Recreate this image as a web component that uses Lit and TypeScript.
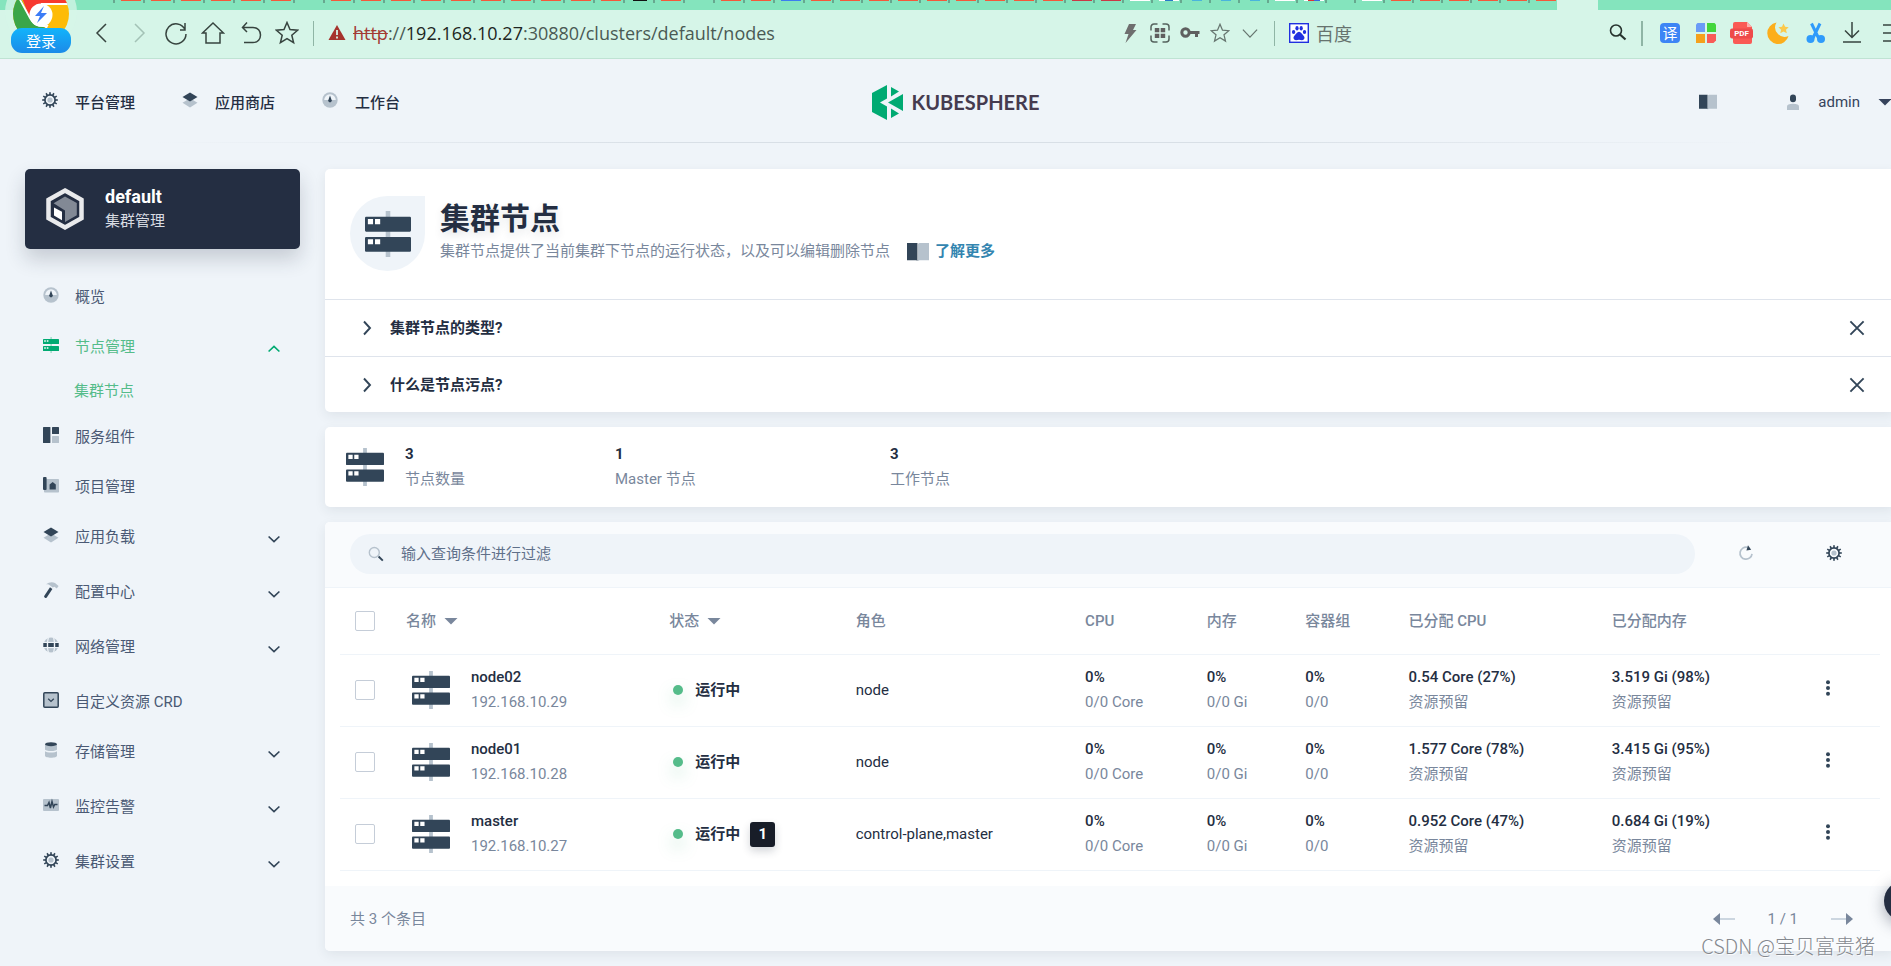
import { LitElement, html, svg, css } from "lit";
import { customElement, property } from "lit/decorators.js";
import { classMap } from "lit/directives/class-map.js";

const DARK = "#324558";
const LIGHT = "#b6c2cd";

/* ---------- icons ---------- */

const gearTeeth = Array.from({ length: 12 }, (_, i) => i * 30);

const glyphs: Record<string, unknown> = {
  gear: svg`
    ${gearTeeth.map((a) => svg`<rect x="7.2" y="0.2" width="1.6" height="3" fill=${DARK} transform="rotate(${a} 8 8)"/>`)}
    <circle cx="8" cy="8" r="5.1" fill="none" stroke=${DARK} stroke-width="1.7"/>
    <circle cx="8" cy="8" r="2.6" fill=${LIGHT}/>`,
  layers: svg`
    <path d="M8 6.2 15.5 10.8 8 15.6.5 10.8Z" fill=${LIGHT}/>
    <path d="M8 .4 15.5 5 8 9.6.5 5Z" fill=${DARK}/>`,
  gauge: svg`
    <circle cx="8" cy="8" r="7.7" fill=${LIGHT}/>
    <path d="M2.2 8a5.8 5.8 0 0 1 11.6 0Z" fill="#eff4f9"/>
    <path d="M8 3.4 9.8 8.6a1.8 1.8 0 1 1-3.6 0Z" fill=${DARK}/>`,
  nodes: svg`
    <path d="M7.4 0h1.4v16H7.4Z" fill="#99dcc5"/>
    <rect x="0" y="2" width="16" height="5" rx=".6" fill="#00aa72"/>
    <rect x="0" y="9" width="16" height="5" rx=".6" fill="#00aa72"/>
    <path d="M1.2 3.2h1.6v1.6H1.2ZM3.8 3.2h1.6v1.6H3.8ZM1.2 10.2h1.6v1.6H1.2ZM3.8 10.2h1.6v1.6H3.8Z" fill="#fff"/>`,
  components: svg`
    <rect x="0" y="0" width="7.4" height="16" rx=".6" fill=${DARK}/>
    <rect x="9" y="0" width="7" height="7" rx=".6" fill=${DARK}/>
    <rect x="9" y="9" width="7" height="7" rx=".6" fill=${LIGHT}/>`,
  project: svg`
    <rect x="1" y="2" width="15" height="13.6" rx=".8" fill=${LIGHT}/>
    <rect x="0" y="0" width="3.6" height="13" rx="1" fill=${DARK}/>
    <path d="M6.6 12.6V7.6L9.7 5l3.1 2.6v5Z" fill=${DARK}/>`,
  hammer: svg`
    <path d="M3 2.200C6 0 9.500-.4 12 1l3.600 3-1.800 2.600-2.400-1.800-1.600.8-2-1.600C6.400 2.600 4.800 2.200 3 2.200Z" fill=${LIGHT}/>
    <path d="M7 5.200 9.400 7 3.800 15.600c-.8 1-3.200-.2-2.600-1.600Z" fill=${DARK}/>`,
  globe: svg`
    <circle cx="8" cy="8" r="7.500" fill=${LIGHT}/>
    <path d="M5.400.5C4.200 5 4.200 11 5.400 15.500M10.600.5c1.200 4.500 1.200 10.500 0 15" stroke="#eff4f9" stroke-width="1.200" fill="none"/>
    <path d="M0 4.900h16v6.200H0Z" fill="#eff4f9"/>
    <path d="M.3 5.900h3.500v4.200H.3ZM5.200 5.900h5.600v4.200H5.200ZM12.200 5.900h3.500v4.200h-3.500Z" fill=${DARK}/>`,
  crd: svg`
    <rect x=".8" y=".8" width="14.400" height="14.400" rx="1" fill=${LIGHT} stroke=${DARK} stroke-width="1.500"/>
    <path d="M5.200 6.700 8 9.400l2.800-2.700" stroke=${DARK} stroke-width="1.300" fill="none"/>`,
  storage: svg`
    <path d="M2 2.500v4.800c0 2.400 12 2.400 12 0V2.500Z" fill=${LIGHT}/>
    <path d="M2 9.300v4.500c0 2.600 12 2.600 12 0V9.300c-1.500 1.700-10.500 1.700-12 0Z" fill=${LIGHT}/>
    <ellipse cx="8" cy="2.200" rx="6" ry="2" fill=${DARK}/>`,
  monitor: svg`
    <rect x="0" y="2" width="16" height="12" rx="1" fill=${LIGHT}/>
    <path d="M1.500 8.500h3L6 5.500 7.400 11 9 4.500l1.500 5.500 1.300-2.500h2.700" stroke=${DARK} stroke-width="1.500" fill="none"/>`,
  book: svg`
    <path d="M0 1.500h7.600v13L6.800 14H0Z" fill=${DARK}/>
    <path d="M16 1.500H9L8 2v12.500l1-.5h7Z" fill=${LIGHT}/>`,
  user: svg`
    <path d="M2 16v-3.500C2 10.500 4 9.700 8 9.700s6 .8 6 2.800V16Z" fill=${LIGHT}/>
    <path d="M5 3.500a3 3 0 0 1 6 0v1.800a3 3 0 0 1-6 0Z" fill=${DARK}/>`,
  magnifier: svg`
    <circle cx="6.300" cy="6.500" r="5" fill="none" stroke=${LIGHT} stroke-width="1.400"/>
    <path d="m10.600 10.500 4.200 4.200" stroke=${DARK} stroke-width="1.900"/>`,
  refresh: svg`
    <path d="M9.500 2.400A6 6 0 1 0 14 8.800" fill="none" stroke=${LIGHT} stroke-width="1.700"/>
    <path d="m10 .2 3.200 4.600-4.800.8Z" fill=${DARK}/>`,
  close: svg`<path d="m1.400 1.400 13.200 13.200M14.600 1.400 1.400 14.600" stroke=${DARK} stroke-width="1.900"/>`,
  right: svg`<path d="m5 1.500 6 6.500-6 6.500" stroke=${DARK} stroke-width="1.900" fill="none"/>`,
  down: svg`<path d="m2.600 5.500 5.400 5 5.400-5" stroke=${DARK} stroke-width="1.700" fill="none"/>`,
  up: svg`<path d="m2.600 10.500 5.400-5 5.400 5" stroke="#00aa72" stroke-width="1.700" fill="none"/>`,
  caret: svg`<path d="M1.500 5h13L8 11.500Z" fill="currentColor"/>`,
  dots: svg`<circle cx="8" cy="2.200" r="2" fill=${DARK}/><circle cx="8" cy="8" r="2" fill=${DARK}/><circle cx="8" cy="13.800" r="2" fill=${DARK}/>`,
};

const icon = (name: string, size = 16) =>
  html`<svg width=${size} height=${size} viewBox="0 0 16 16" aria-hidden="true">${glyphs[name]}</svg>`;

const serverIcon = (size: number) => html`
  <svg width=${size} height=${size} viewBox="0 0 40 40" aria-hidden="true">
    <path d="M18 0h4v40h-4Z" fill=${LIGHT}/>
    <rect x="0" y="5" width="40" height="13" rx="1" fill=${DARK}/>
    <rect x="0" y="22.500" width="40" height="13" rx="1" fill=${DARK}/>
    <path d="M2.500 7h4.500v4.500H2.500ZM8.700 7h4.500v4.500H8.700ZM2.500 24.500h4.500V29H2.500ZM8.700 24.500h4.500V29H8.700Z" fill="#fff"/>
  </svg>`;

/* ---------- browser bar ---------- */

const tabKinds =
  "rrrrrr-rrrrrrrrrrkr-rrb" + "rrrrrrrrrddwmcccwx-wrrrrrr";

const tabClass: Record<string, string> = {
  r: "red", d: "crimson", w: "white", m: "mixed", c: "sky", k: "black", b: "blue", x: "multi", "-": "none",
};

@customElement("browser-bar")
export class BrowserBar extends LitElement {
  static styles = css`
    :host { display: block; position: relative; }
    * { box-sizing: border-box; }
    svg { display: block; flex: none; }
    button { border: 0; padding: 0; background: none; font: inherit; color: inherit; }
    .tabs { display: flex; height: 10px; background: #84e4bd; padding-left: 113px; }
    .tab { flex: 0 1 30px; height: 3px; padding-left: 6px; border-left: 2px solid #67a88f; }
    .tab.late { flex-basis: 29px; }
    .fav { display: block; width: 20px; height: 1px; }
    .red { background: #f4593a; }
    .crimson { background: #c93a45; }
    .white { background: #fff; }
    .mixed { background: linear-gradient(90deg, #fff 30%, #2878c8 30% 70%, #fff 70%); }
    .sky { background: #4ab4dc; width: 10px; margin-left: 4px; }
    .black { background: #111; width: 14px; margin-left: 2px; }
    .blue { background: #3c7df0; }
    .multi { background: linear-gradient(90deg, #fff 20%, #d33 20% 50%, #3a6ae0 50% 80%, #fff 80%); }
    .active { width: 41px; height: 10px; background: #d6f5e8; flex: none; }
    .bar {
      display: flex; align-items: center; height: 49px; padding: 0 0 2px 90px;
      background: #d6f5e8; border-bottom: 1px solid #bfe3d3; color: #4a5a54;
      font: 18px "Noto Sans", "Noto Sans CJK SC", sans-serif;
    }
    .group { display: flex; align-items: center; flex: none; }
    .nav { gap: 13px; }
    .mid { gap: 10px; }
    .tools { gap: 12px; margin-right: -7px; }
    .sep { width: 1px; height: 25px; background: #8fb5a5; margin: 0 14px; flex: none; }
    .sep.thick { width: 2px; margin: 0 15px 0 13px; }
    .address { display: flex; align-items: center; flex: 1; gap: 7px; min-width: 0; font: 18px "Open Sans", "Noto Sans", sans-serif; white-space: nowrap; }
    .scheme { color: #a33a33; text-decoration: line-through; }
    .host { color: #1d2622; }
    .bookmark { display: flex; align-items: center; gap: 7px; color: #66736e; text-decoration: none; }
    .free { flex: 0 1 256px; }
    .brand { position: absolute; left: 5px; top: 0; width: 72px; height: 58px; display: flex; justify-content: center; align-items: flex-start; }
    .brand svg { position: absolute; left: 0; top: 0; }
    .login {
      position: relative; margin-top: 28px; width: 60px; height: 25px; border-radius: 11px;
      background: linear-gradient(#12b4fb, #1c8ae8); color: #fff; font: 15px/24px "Noto Sans CJK SC", sans-serif;
    }
    .lang { font: 15px "Noto Sans CJK SC", sans-serif; }
    .pdf { font: bold 8px Roboto, sans-serif; }
  `;

  private stroke(d: string, color = "#37443f", size = 24) {
    return html`<svg width=${size} height=${size} viewBox="0 0 24 24" fill="none" stroke=${color} stroke-width="1.500" aria-hidden="true"><path d=${d}/></svg>`;
  }

  render() {
    const star = "m12 1.500 3 7.100 7.600.6-5.800 5 1.800 7.500-6.600-4-6.600 4 1.800-7.500-5.800-5 7.600-.6Z";
    return html`
      <div class="tabs">
        ${[...tabKinds].map((k, i) => html`<span class=${classMap({ tab: true, late: i > 22 })}><i class="fav ${tabClass[k]}"></i></span>`)}
        <span class="active"></span>
      </div>
      <div class="bar">
        <div class="group nav">
          <button aria-label="后退">${this.stroke("m16 3-9 9 9 9")}</button>
          <button aria-label="前进">${this.stroke("m8 3 9 9-9 9", "#a3c2b6")}</button>
          <button aria-label="刷新">${this.stroke("M21 5v4h-5M21 8.500A10 10 0 1 0 22 13M16 9h5V2")}</button>
          <button aria-label="主页">${this.stroke("m1.500 12 10.500-10 10.500 10H19v10H5V12Z")}</button>
          <button aria-label="恢复">${this.stroke("M9 1.500 4.500 6.500 9 11M4.500 6.500H15c10 0 10 15 0 15H6")}</button>
          <button aria-label="收藏">${this.stroke(star)}</button>
        </div>
        <span class="sep"></span>
        <div class="address">
          <svg width="18" height="16" viewBox="0 0 18 16" aria-hidden="true"><path d="M9 0 17.500 15H.5Z" fill="#a5332c"/><path d="M9 5v5M9 11.500v2" stroke="#d6f5e8" stroke-width="1.800"/></svg>
          <span><span class="scheme">http</span>://<span class="host">192.168.10.27</span>:30880/clusters/default/nodes</span>
        </div>
        <div class="group mid">
          <svg width="20" height="20" viewBox="0 0 20 20" aria-hidden="true"><path d="M9 1h7l-3 6h3.500L5.500 20 8.500 11H4.500Z" fill="#6e6e6e"/></svg>
          <svg width="20" height="20" viewBox="0 0 20 20" aria-hidden="true"><path d="M7.500 1H4a3 3 0 0 0-3 3v3.500M12.500 1H16a3 3 0 0 1 3 3v3.500M7.500 19H4a3 3 0 0 1-3-3v-3.500M12.500 19H16a3 3 0 0 0 3-3v-3.500" fill="none" stroke="#56635e" stroke-width="1.500"/><path d="M4.800 5h4.500v4.300H4.800ZM10.700 5h4.500v4.300h-4.500ZM4.800 10.700h4.500V15H4.800ZM10.700 10.700h4.500V15h-4.500Z" fill="#5f5f5f"/></svg>
          <svg width="20" height="20" viewBox="0 0 20 20" aria-hidden="true"><circle cx="5.500" cy="9.500" r="3.700" fill="none" stroke="#5f5f5f" stroke-width="3"/><path d="M8.500 8h11v3H18v3h-3v-3H8.500Z" fill="#5f5f5f"/></svg>
          ${this.stroke(star, "#66756f", 20)}
          ${this.stroke("m3.500 8 8.500 9 8.500-9", "#66756f", 20)}
        </div>
        <span class="sep"></span>
        <a class="bookmark" href="#baidu">
          <svg width="20" height="20" viewBox="0 0 20 20" aria-hidden="true"><rect x=".7" y=".7" width="18.600" height="18.600" fill="#fff" stroke="#2130e0" stroke-width="1.400"/><g fill="#2130e0"><ellipse cx="4.600" cy="9" rx="1.700" ry="2.100"/><ellipse cx="8" cy="5.200" rx="1.600" ry="2.200"/><ellipse cx="12.200" cy="5.200" rx="1.600" ry="2.200"/><ellipse cx="15.500" cy="9" rx="1.700" ry="2.100"/><path d="M10 8.800c2 0 3 2.500 4.800 4.200 1.500 1.700.4 4.200-1.800 4.200-1.200 0-2-.4-3-.4s-1.800.4-3 .4c-2.200 0-3.300-2.500-1.800-4.200C7 11.300 8 8.800 10 8.800Z"/></g></svg>
          百度
        </a>
        <span class="free"></span>
        <button aria-label="搜索"><svg width="20" height="20" viewBox="0 0 20 20" fill="none" stroke="#26322d" aria-hidden="true"><circle cx="8" cy="7.500" r="5.500" stroke-width="1.600"/><path d="m12 11.500 5.500 5" stroke-width="2.200"/></svg></button>
        <span class="sep thick"></span>
        <div class="group tools">
          <svg width="24" height="24" viewBox="0 0 24 24" aria-hidden="true"><rect x="2" y="2" width="20" height="20" rx="4" fill="#3d85f5"/><text class="lang" x="12" y="17.500" text-anchor="middle" fill="#fff">译</text></svg>
          <svg width="24" height="24" viewBox="0 0 24 24" aria-hidden="true"><path d="M3.500 2H11v9H2V3.500Z" fill="#6a9bf7"/><path d="M13 2h7.500L22 3.500V11h-9Z" fill="#42d63c"/><path d="M2 13h9v9H2Z" fill="#f5a11c"/><path d="M13 13h9v6.500L19.500 22H13Z" fill="#f95b57"/></svg>
          <svg width="24" height="24" viewBox="0 0 24 24" aria-hidden="true"><path d="M5 1h12l5 5v15a2 2 0 0 1-2 2H5a2 2 0 0 1-2-2V3a2 2 0 0 1 2-2Z" fill="#fa5a55"/><path d="m17 1 5 5h-5Z" fill="#fdb0ad"/><rect x="0" y="7.500" width="23" height="10" rx="2" fill="#ee4b4b"/><text class="pdf" x="11.500" y="15.400" text-anchor="middle" fill="#fff">PDF</text></svg>
          <svg width="24" height="24" viewBox="0 0 24 24" aria-hidden="true"><path d="M10.500 1.500A10.800 10.800 0 1 0 22.500 15 9.500 9.500 0 0 1 10.500 1.500Z" fill="#fcae1c"/><path d="m17.500 2.500 1.600 3.300 3.600.4-2.700 2.500.8 3.600-3.300-1.900-3.200 1.900.8-3.600-2.700-2.500 3.600-.4Z" fill="#fbc94b"/></svg>
          <svg width="24" height="24" viewBox="0 0 24 24" aria-hidden="true"><path d="m9.500 2.500 7 14.500M18 2.500 11 17" stroke="#2f9bfb" stroke-width="3"/><circle cx="8.500" cy="18" r="4" fill="#2f9bfb"/><circle cx="19" cy="18" r="4" fill="#2f9bfb"/></svg>
          ${this.stroke("M14 1v15M7 9.500l7 7 7-7M5 21h18")}
          ${this.stroke("M9 4h15M9 12h15M9 20h15")}
        </div>
      </div>
      <div class="brand">
        <svg width="72" height="58" viewBox="0 0 72 58" aria-hidden="true">
          <defs><clipPath id="disc"><circle cx="36" cy="14" r="28"/></clipPath></defs>
          <circle cx="36" cy="12" r="36" fill="#d6f5e8" opacity=".75"/>
          <g clip-path="url(#disc)">
            <path d="M0-20h72v70H0Z" fill="#fdbb08"/>
            <path d="M0-10h12L26 20l14 8-4 20H0Z" fill="#3aa648"/>
            <path d="M14-10h58V4H40L24 16Z" fill="#f7392f"/>
            <path d="M13-4 25 18c4 7 8 9 17 8l-4 8M36 4h36" stroke="#fff" stroke-width="1.800" fill="none"/>
          </g>
          <circle cx="36" cy="15" r="11.500" fill="#fff"/>
          <path d="m39 6-9 10h5l-3 7 10-10h-6Z" fill="#3c7cf6"/>
        </svg>
        <button class="login">登录</button>
      </div>
    `;
  }
}

/* ---------- sidebar ---------- */

interface NavItem { icon: string; label: string; group?: boolean; open?: boolean; children?: string[]; }

const navItems: NavItem[] = [
  { icon: "gauge", label: "概览" },
  { icon: "nodes", label: "节点管理", group: true, open: true, children: ["集群节点"] },
  { icon: "components", label: "服务组件" },
  { icon: "project", label: "项目管理" },
  { icon: "layers", label: "应用负载", group: true },
  { icon: "hammer", label: "配置中心", group: true },
  { icon: "globe", label: "网络管理", group: true },
  { icon: "crd", label: "自定义资源 CRD" },
  { icon: "storage", label: "存储管理", group: true },
  { icon: "monitor", label: "监控告警", group: true },
  { icon: "gear", label: "集群设置", group: true },
];

@customElement("side-nav")
export class SideNav extends LitElement {
  static styles = css`
    :host { display: block; }
    * { box-sizing: border-box; }
    svg { display: block; flex: none; }
    .cluster {
      display: flex; align-items: center; gap: 20px; width: 100%; height: 80px; padding: 0 20px;
      border: 0; border-radius: 5px; background: #242e42; color: #fff; text-align: left;
      font: inherit; box-shadow: 0 10px 20px rgba(36, 46, 66, 0.2);
    }
    .name { display: block; font-size: 18px; line-height: 25px; font-weight: 700; }
    .kind { display: block; line-height: 25px; color: #d8dce3; }
    ul { list-style: none; margin: 0; padding: 0; }
    .menu { padding-top: 23px; }
    .link { display: flex; align-items: center; gap: 16px; height: 50px; padding: 0 18px; color: #4a5974; text-decoration: none; }
    .group .link { margin-bottom: 5px; }
    .glyph { padding-bottom: 4px; }
    .chevron { padding-top: 4px; }
    .label { flex: 1; }
    .open .link { color: #55bc8a; margin-bottom: 0; }
    .open .sub { display: block; height: 40px; line-height: 38px; padding-left: 49px; color: #55bc8a; text-decoration: none; }
  `;

  render() {
    return html`
      <button class="cluster">
        <svg width="40" height="44" viewBox="0 0 40 44" aria-hidden="true">
          <path d="m20 3.500 16.500 9.300v18.400L20 40.500 3.500 31.200V12.800Z" fill="none" stroke="#e9eaec" stroke-width="4.500"/>
          <path d="m20 9.500 11.800 6.600v12.200L20 35V23.500L8.600 16.300Z" fill="#828995"/>
          <path d="m9 20.500 8 4.200v8.500l-8-4.600Z" fill="#fff"/>
        </svg>
        <span><span class="name">default</span><span class="kind">集群管理</span></span>
      </button>
      <nav>
        <ul class="menu">
          ${navItems.map((n) => html`
            <li class=${classMap({ group: !!n.group, open: !!n.open })}>
              <a class="link" href="#${n.icon}">
                <span class="glyph">${icon(n.icon)}</span>
                <span class="label">${n.label}</span>
                ${n.group ? html`<span class="chevron">${icon(n.open ? "up" : "down")}</span>` : ""}
              </a>
              ${n.children?.map((c) => html`<a class="sub" href="#nodes">${c}</a>`)}
            </li>`)}
        </ul>
      </nav>
    `;
  }
}

/* ---------- node table ---------- */

interface NodeRow { name: string; ip: string; role: string; cpu: string; mem: string; taints?: number; }

const rows: NodeRow[] = [
  { name: "node02", ip: "192.168.10.29", role: "node", cpu: "0.54 Core (27%)", mem: "3.519 Gi (98%)" },
  { name: "node01", ip: "192.168.10.28", role: "node", cpu: "1.577 Core (78%)", mem: "3.415 Gi (95%)" },
  { name: "master", ip: "192.168.10.27", role: "control-plane,master", cpu: "0.952 Core (47%)", mem: "0.684 Gi (19%)", taints: 1 },
];

@customElement("node-table")
export class NodeTable extends LitElement {
  @property({ attribute: false }) rows: NodeRow[] = [];

  static styles = css`
    :host { display: block; border-radius: 5px; background: #fff; box-shadow: 0 4px 12px rgba(36, 46, 66, 0.08); }
    * { box-sizing: border-box; }
    svg { display: block; flex: none; }
    button { border: 0; padding: 0; background: none; font: inherit; color: inherit; }
    .toolbar { display: flex; align-items: center; height: 66px; padding: 0 53px 2px 25px; background: #f9fbfd; border-bottom: 1px solid #eff4f9; border-radius: 5px 5px 0 0; }
    .search { display: flex; align-items: center; gap: 17px; flex: 1; height: 40px; padding: 0 18px; border-radius: 20px; background: #eff4f9; margin-right: 43px; }
    .search input { flex: 1; border: 0; padding: 0; outline: 0; background: none; font: inherit; color: #242e42; }
    .search input::placeholder { color: #5f708a; opacity: 1; }
    .toolbar button { padding: 0 0 2px; margin-right: 72px; }
    .toolbar button:last-child { margin-right: 0; }
    .frame { padding: 0 15px 15px; }
    table { width: 100%; border-collapse: collapse; table-layout: fixed; }
    .c-check { width: 51px; }
    .c-name { width: 17.1%; }
    .c-status { width: 12.1%; }
    .c-role { width: 14.9%; }
    .c-cpu { width: 7.9%; }
    .c-mem { width: 6.4%; }
    .c-pod { width: 6.7%; }
    .c-alloc { width: 13.2%; }
    th { height: 66px; padding: 0 0 0 15px; text-align: left; font-weight: 500; color: #79879c; }
    td { height: 72px; padding: 0 0 0 15px; }
    th, td { border-bottom: 1px solid #eff4f9; vertical-align: middle; white-space: nowrap; }
    .sort { display: inline-flex; align-items: center; gap: 7px; }
    .tick { appearance: none; display: block; width: 20px; height: 20px; margin: 0; border: 1px solid #c5cdd8; border-radius: 2px; background: #fff; }
    .node { display: flex; align-items: center; gap: 21px; padding-left: 6px; }
    .strong { display: block; line-height: 25px; font-weight: 500; color: #242e42; }
    .soft { display: block; line-height: 25px; color: #79879c; }
    .status { display: flex; align-items: center; gap: 12px; padding-left: 4px; font-weight: 700; color: #242e42; }
    .dot { width: 10px; height: 10px; border-radius: 50%; background: #55bc8a; box-shadow: 0 8px 16px rgba(85, 188, 138, 0.36); }
    .badge { min-width: 25px; height: 25px; margin-left: -2px; border-radius: 3px; background: #181d28; color: #fff; text-align: center; line-height: 25px; font-weight: 700; box-shadow: 0 4px 8px rgba(36, 46, 66, 0.2); }
    .role { color: #242e42; }
    .more { display: block; padding: 0 5px 4px; }
    .footer { display: flex; align-items: center; justify-content: space-between; height: 65px; padding: 2px 42px 0 25px; background: #f9fbfd; color: #79879c; border-radius: 0 0 5px 5px; }
    .pager { display: flex; align-items: center; gap: 33px; }
  `;

  private metric(top: string, bottom: string) {
    return html`<td><span class="strong">${top}</span><span class="soft">${bottom}</span></td>`;
  }

  render() {
    return html`
      <div class="toolbar">
        <label class="search">${icon("magnifier")}<input type="text" aria-label="过滤" placeholder="输入查询条件进行过滤"/></label>
        <button aria-label="刷新">${icon("refresh")}</button>
        <button aria-label="设置">${icon("gear")}</button>
      </div>
      <div class="frame">
        <table>
          <colgroup>
            <col class="c-check"/><col class="c-name"/><col class="c-status"/><col class="c-role"/><col class="c-cpu"/>
            <col class="c-mem"/><col class="c-pod"/><col class="c-alloc"/><col class="c-alloc"/><col/>
          </colgroup>
          <thead>
            <tr>
              <th><input class="tick" type="checkbox" aria-label="全选"/></th>
              <th><button class="sort">名称 ${icon("caret")}</button></th>
              <th><button class="sort">状态 ${icon("caret")}</button></th>
              <th>角色</th><th>CPU</th><th>内存</th><th>容器组</th><th>已分配 CPU</th><th>已分配内存</th><th></th>
            </tr>
          </thead>
          <tbody>
            ${this.rows.map((r) => html`
              <tr>
                <td><input class="tick" type="checkbox" aria-label=${r.name}/></td>
                <td><div class="node">${serverIcon(38)}<div><span class="strong">${r.name}</span><span class="soft">${r.ip}</span></div></div></td>
                <td><div class="status"><i class="dot"></i>运行中${r.taints ? html`<span class="badge">${r.taints}</span>` : ""}</div></td>
                <td class="role">${r.role}</td>
                ${this.metric("0%", "0/0 Core")}
                ${this.metric("0%", "0/0 Gi")}
                ${this.metric("0%", "0/0")}
                ${this.metric(r.cpu, "资源预留")}
                ${this.metric(r.mem, "资源预留")}
                <td><button class="more" aria-label="更多操作">${icon("dots")}</button></td>
              </tr>`)}
          </tbody>
        </table>
      </div>
      <div class="footer">
        <span>共 ${this.rows.length} 个条目</span>
        <div class="pager">
          <button aria-label="上一页"><svg width="22" height="12" viewBox="0 0 22 12"><path d="M6 6h16" stroke="#ccd6e0" stroke-width="2"/><path d="M7 0v12L0 6Z" fill="#79879c"/></svg></button>
          <span>1 / 1</span>
          <button aria-label="下一页"><svg width="22" height="12" viewBox="0 0 22 12"><path d="M0 6h16" stroke="#ccd6e0" stroke-width="2"/><path d="M15 0v12l7-6Z" fill="#79879c"/></svg></button>
        </div>
      </div>
    `;
  }
}

/* ---------- page ---------- */

@customElement("app-root")
export class AppRoot extends LitElement {
  static styles = css`
    :host {
      display: block; position: relative; min-height: 100vh; overflow: hidden; background: #eff4f9; color: #242e42;
      font: 15px/20px Roboto, "Noto Sans CJK SC", sans-serif;
    }
    * { box-sizing: border-box; }
    svg { display: block; flex: none; }
    button { border: 0; padding: 0; background: none; font: inherit; color: inherit; }
    .page { width: calc(100% + 20px); }
    .header { display: grid; grid-template-columns: 1fr auto 1fr; align-items: center; height: 83px; padding: 3px 18px 0; }
    .edge { height: 1px; background: linear-gradient(90deg, rgba(216, 223, 230, 0) 8%, #d8dfe6 35% 65%, rgba(216, 223, 230, 0) 92%); }
    .links { display: flex; gap: 47px; padding: 2px 0 0 24px; }
    .top { display: flex; align-items: center; gap: 17px; color: #242e42; text-decoration: none; font-weight: 500; }
    .glyph { padding-bottom: 6px; }
    .logo { display: flex; align-items: center; gap: 9px; color: #453b4f; font: bold 20px/35px Lato, sans-serif; text-decoration: none; }
    .tools { display: flex; align-items: center; justify-content: flex-end; gap: 68px; color: #36435c; }
    .account { display: flex; align-items: center; gap: 17px; }
    .body { display: grid; grid-template-columns: 275px minmax(0, 1fr); gap: 25px; padding: 26px 16px 15px 25px; }
    .main { display: grid; gap: 15px; align-content: start; }
    .card { border-radius: 5px; background: #fff; box-shadow: 0 4px 12px rgba(36, 46, 66, 0.08); }
    .banner { display: flex; gap: 15px; height: 130px; padding: 27px 25px 0; }
    .emblem { display: grid; place-items: center; width: 75px; height: 75px; border-radius: 50% 0 50% 50%; background: #eff4f9; }
    h1 { margin: 0; padding-top: 3px; font-size: 30px; line-height: 40px; font-weight: 700; text-shadow: 0 4px 8px rgba(36, 46, 66, 0.12); }
    .about { display: flex; align-items: center; margin: 0; line-height: 25px; color: #79879c; }
    .learn { display: flex; align-items: center; gap: 6px; margin-left: 17px; color: #3385b0; font-weight: 700; text-decoration: none; }
    .tip { display: flex; align-items: center; height: 57px; padding: 0 30px 0 34px; border-top: 1px solid #dfe4ec; font-weight: 500; }
    .tip:last-child { height: 56px; }
    .ask { display: flex; align-items: center; gap: 15px; flex: 1; font-weight: 700; }
    .stats { display: flex; align-items: center; height: 80px; padding: 0 21px; }
    .stat { display: flex; flex-direction: column-reverse; margin: 0 0 0 21px; width: 189px; }
    .stat.wide { width: 254px; }
    dl { margin: 0; display: flex; }
    dt, dd { margin: 0; line-height: 25px; }
    dt { color: #79879c; }
    dd { font-weight: 700; }
    .helper { position: absolute; left: calc(100% - 7px); top: 881px; width: 40px; height: 40px; border-radius: 50%; background: #242e42; box-shadow: 0 4px 16px rgba(36, 46, 66, 0.4); }
    .mark { position: absolute; right: 16px; bottom: 5px; font: 300 20px/30px "Noto Sans CJK SC", sans-serif; color: #85898f; text-shadow: 1px 1px 1px #fff; }
  `;

  render() {
    return html`
      <browser-bar></browser-bar>
      <div class="page">
        <header class="header">
          <nav class="links">
            <a class="top" href="#platform"><span class="glyph">${icon("gear")}</span>平台管理</a>
            <a class="top" href="#apps"><span class="glyph">${icon("layers")}</span>应用商店</a>
            <a class="top" href="#workbench"><span class="glyph">${icon("gauge")}</span>工作台</a>
          </nav>
          <a class="logo" href="#home">
            <svg width="31" height="35" viewBox="0 0 31 35" fill="#00aa72" aria-hidden="true"><path d="M0 8 15 0v13.500L8 17.500l7 4V35L0 27ZM19 2l8 4.500-8 5ZM31 9v17L16 17.500ZM19 23.500l8 5-8 4.500Z"/></svg>
            KUBESPHERE
          </a>
          <div class="tools">
            <button aria-label="文档">${icon("book", 18)}</button>
            <button class="account">${icon("user")}<span>admin</span>${icon("caret")}</button>
          </div>
        </header>
        <div class="edge"></div>
        <div class="body">
          <side-nav></side-nav>
          <main class="main">
            <section class="card">
              <div class="banner">
                <div class="emblem">${serverIcon(46)}</div>
                <div>
                  <h1>集群节点</h1>
                  <p class="about">集群节点提供了当前集群下节点的运行状态，以及可以编辑删除节点
                    <a class="learn" href="#learn">${icon("book", 22)}了解更多</a></p>
                </div>
              </div>
              ${["集群节点的类型?", "什么是节点污点?"].map((q) => html`
                <div class="tip">
                  <button class="ask">${icon("right")}${q}</button>
                  <button aria-label="关闭">${icon("close")}</button>
                </div>`)}
            </section>
            <section class="card stats">
              ${serverIcon(38)}
              <dl>
                <div class="stat"><dt>节点数量</dt><dd>3</dd></div>
                <div class="stat wide"><dt>Master 节点</dt><dd>1</dd></div>
                <div class="stat"><dt>工作节点</dt><dd>3</dd></div>
              </dl>
            </section>
            <node-table .rows=${rows}></node-table>
          </main>
        </div>
      </div>
      <button class="helper" aria-label="工具箱"></button>
      <span class="mark">CSDN @宝贝富贵猪</span>
    `;
  }
}
